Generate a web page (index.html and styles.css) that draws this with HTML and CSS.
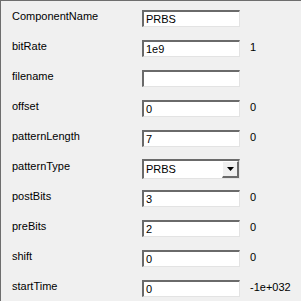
FILE: index.html
```html
<!DOCTYPE html>
<html lang="en">
<head>
    <meta charset="UTF-8">
    <title>Properties</title>
    <link rel="stylesheet" href="styles.css">
</head>
<body>
    <div class="panel">
        <div class="row">
            <span class="label">ComponentName</span>
            <div class="field">PRBS</div>
            <span class="value"></span>
        </div>
        <div class="row">
            <span class="label">bitRate</span>
            <div class="field">1e9</div>
            <span class="value">1</span>
        </div>
        <div class="row">
            <span class="label">filename</span>
            <div class="field"></div>
            <span class="value"></span>
        </div>
        <div class="row">
            <span class="label">offset</span>
            <div class="field">0</div>
            <span class="value">0</span>
        </div>
        <div class="row">
            <span class="label">patternLength</span>
            <div class="field">7</div>
            <span class="value">0</span>
        </div>
        <div class="row">
            <span class="label">patternType</span>
            <div class="combo">
                <span class="combo-text">PRBS</span>
                <span class="combo-btn">
                    <svg width="7" height="4" viewBox="0 0 7 4"><path d="M0 0h7L3.5 4z" fill="#000"/></svg>
                </span>
            </div>
            <span class="value"></span>
        </div>
        <div class="row">
            <span class="label">postBits</span>
            <div class="field">3</div>
            <span class="value">0</span>
        </div>
        <div class="row">
            <span class="label">preBits</span>
            <div class="field">2</div>
            <span class="value">0</span>
        </div>
        <div class="row">
            <span class="label">shift</span>
            <div class="field">0</div>
            <span class="value">0</span>
        </div>
        <div class="row">
            <span class="label">startTime</span>
            <div class="field">0</div>
            <span class="value">-1e+032</span>
        </div>
    </div>
</body>
</html>
```

FILE: styles.css
```css
body {
    margin: 0;
    background-color: #f0f0f0;
    font-family: "Liberation Sans", Arial, sans-serif;
    font-size: 11px;
    color: #000;
}
.panel {
    height: 301px;
    box-sizing: border-box;
    border-top: 1px solid #6e6e6e;
    border-left: 1px solid #6e6e6e;
    padding: 8px 0 0 11px;
}
.row {
    display: flex;
    align-items: flex-start;
    height: 30px;
}
.label {
    width: 130px;
    line-height: 13px;
    padding-top: 1px;
}
.field {
    box-sizing: border-box;
    width: 98px;
    height: 17px;
    margin-top: 1px;
    background-color: #fff;
    border-top: 2px solid #6a6a6a;
    border-left: 2px solid #6a6a6a;
    border-right: 1px solid #e3e3e3;
    border-bottom: 1px solid #e3e3e3;
    padding: 1px 0 0 2px;
    line-height: 12px;
}
.value {
    margin-left: 10px;
    line-height: 13px;
    padding-top: 2px;
}
.combo {
    box-sizing: border-box;
    width: 98px;
    height: 20px;
    background-color: #fff;
    border-top: 2px solid #6a6a6a;
    border-left: 2px solid #6a6a6a;
    border-right: 1px solid #e3e3e3;
    border-bottom: 1px solid #e3e3e3;
    display: flex;
    align-items: center;
    justify-content: space-between;
}
.combo-text {
    padding-left: 2px;
    line-height: 13px;
}
.combo-btn {
    box-sizing: border-box;
    width: 17px;
    height: 17px;
    background-color: #f0f0f0;
    border-top: 1px solid #fff;
    border-left: 1px solid #fff;
    border-right: 2px solid #6a6a6a;
    border-bottom: 2px solid #6a6a6a;
    display: flex;
    align-items: center;
    justify-content: center;
}
```
